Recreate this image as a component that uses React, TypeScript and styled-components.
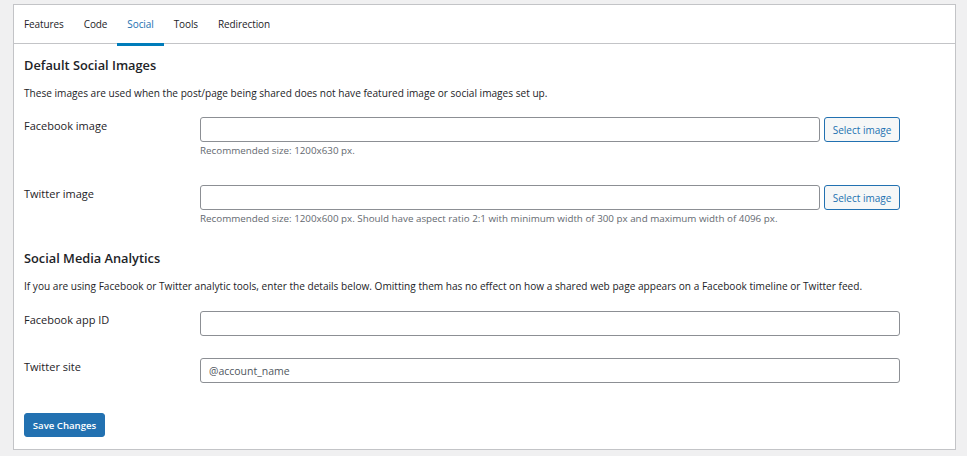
import React from "react";
import styled, { createGlobalStyle } from "styled-components";

const Global = createGlobalStyle`
  html, body { margin: 0; padding: 0; }
  body {
    background: #f0f0f1;
    font-family: "Open Sans", "Noto Sans", sans-serif;
    color: #1d2327;
  }
  * { box-sizing: border-box; }
`;

const Page = styled.div`
  padding: 4px 11px 0 13px;
`;

const Panel = styled.div`
  background: #fff;
  border: 1px solid #c3c4c7;
  height: 446px;
`;

const Tabs = styled.nav`
  display: flex;
  height: 39px;
  border-bottom: 1px solid #c3c4c7;
`;

const Tab = styled.a<{ $active?: boolean }>`
  display: flex;
  align-items: center;
  padding: 0 10px;
  height: 38px;
  font-size: 10px;
  font-weight: 500;
  letter-spacing: -0.1px;
  color: ${(p) => (p.$active ? "#2271b1" : "#1d2327")};
  border-bottom: 3px solid ${(p) => (p.$active ? "#007cba" : "transparent")};
  box-sizing: content-box;
  margin-bottom: -1px;
  cursor: pointer;
`;

const Content = styled.div`
  padding: 11px 10px 0 10px;
`;

const Heading = styled.h2<{ $top?: number }>`
  margin: ${(p) => p.$top ?? 0}px 0 0 0;
  font-size: 12.8px;
  font-weight: 600;
  line-height: 20px;
  color: #1d2327;
`;

const Intro = styled.p`
  margin: 11px 0 0 0;
  font-size: 10.1px;
  line-height: 14px;
  color: #1d2327;
`;

const Row = styled.div<{ $top: number }>`
  display: grid;
  grid-template-columns: 176px 1fr;
  margin-top: ${(p) => p.$top}px;
`;

const Label = styled.label`
  font-size: 11px;
  font-weight: 400;
  line-height: 16px;
  color: #1d2327;
  padding-top: 1px;
`;

const Field = styled.div`
  display: flex;
  flex-direction: column;
`;

const Line = styled.div`
  display: flex;
  gap: 4px;
`;

const Input = styled.input<{ $w: number }>`
  width: ${(p) => p.$w}px;
  height: 25px;
  border: 1px solid #8c8f94;
  border-radius: 3px;
  padding: 0 8px;
  font-family: inherit;
  font-size: 10.5px;
  color: #2c3338;
  background: #fff;
  outline: none;
  &::placeholder { color: #50575e; }
`;

const SecondaryButton = styled.button`
  height: 25px;
  width: 76px;
  padding: 0;
  border: 1px solid #2271b1;
  border-radius: 3px;
  background: #f6f7f7;
  color: #2271b1;
  font-family: inherit;
  font-size: 10px;
  cursor: pointer;
`;

const Hint = styled.p`
  margin: 2px 0 0 0;
  font-size: 9.8px;
  line-height: 14px;
  color: #646970;
`;

const PrimaryButton = styled.button`
  margin-top: 30px;
  height: 24px;
  width: 81px;
  padding: 0;
  border: 1px solid #2271b1;
  border-radius: 3px;
  background: #2271b1;
  color: #fff;
  font-family: inherit;
  font-size: 9.6px;
  font-weight: 600;
  cursor: pointer;
`;

const tabs = ["Features", "Code", "Social", "Tools", "Redirection"];

export default function App() {
  return (
    <>
      <Global />
      <Page>
        <Panel>
          <Tabs>
            {tabs.map((t) => (
              <Tab key={t} $active={t === "Social"}>
                {t}
              </Tab>
            ))}
          </Tabs>
          <Content>
            <Heading>Default Social Images</Heading>
            <Intro>
              These images are used when the post/page being shared does not have featured image or social images set up.
            </Intro>
            <Row $top={17}>
              <Label>Facebook image</Label>
              <Field>
                <Line>
                  <Input $w={620} />
                  <SecondaryButton>Select image</SecondaryButton>
                </Line>
                <Hint>Recommended size: 1200x630 px.</Hint>
              </Field>
            </Row>
            <Row $top={27}>
              <Label>Twitter image</Label>
              <Field>
                <Line>
                  <Input $w={620} />
                  <SecondaryButton>Select image</SecondaryButton>
                </Line>
                <Hint>
                  Recommended size: 1200x600 px. Should have aspect ratio 2:1 with minimum width of 300 px and maximum width of 4096 px.
                </Hint>
              </Field>
            </Row>
            <Heading $top={22}>Social Media Analytics</Heading>
            <Intro>
              If you are using Facebook or Twitter analytic tools, enter the details below. Omitting them has no effect on how a shared web page appears on a Facebook timeline or Twitter feed.
            </Intro>
            <Row $top={18}>
              <Label>Facebook app ID</Label>
              <Field>
                <Input $w={700} />
              </Field>
            </Row>
            <Row $top={22}>
              <Label>Twitter site</Label>
              <Field>
                <Input $w={700} placeholder="@account_name" />
              </Field>
            </Row>
            <PrimaryButton>Save Changes</PrimaryButton>
          </Content>
        </Panel>
      </Page>
    </>
  );
}
